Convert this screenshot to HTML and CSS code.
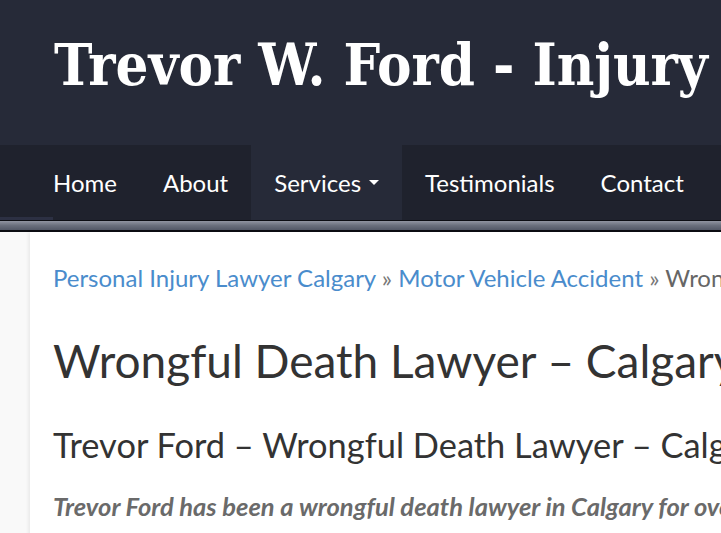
FILE: index.html
```html
<!DOCTYPE html>
<html lang="en">
<head>
  <meta charset="UTF-8">
  <title>Wrongful Death Lawyer – Calgary</title>
  <link rel="stylesheet" href="styles.css">
</head>
<body>
  <header class="site-header">
    <div class="site-title">Trevor W. Ford - Injury Lawyer Calgary</div>
  </header>

  <nav class="main-nav">
    <ul class="menu">
      <li class="menu-item"><a href="#">Home</a></li>
      <li class="menu-item"><a href="#">About</a></li>
      <li class="menu-item active"><a href="#">Services <span class="caret"></span></a></li>
      <li class="menu-item"><a href="#">Testimonials</a></li>
      <li class="menu-item"><a href="#">Contact</a></li>
    </ul>
  </nav>
  <div class="nav-rule"></div>

  <main class="page">
    <div class="content">
      <p class="breadcrumbs">
        <a href="#">Personal Injury Lawyer Calgary</a> <span class="sep">»</span>
        <a href="#">Motor Vehicle Accident</a> <span class="sep">»</span>
        <span class="current">Wrongful Death Lawyer</span>
      </p>

      <h1 class="entry-title">Wrongful Death Lawyer – Calgary</h1>

      <h2>Trevor Ford – Wrongful Death Lawyer – Calgary</h2>

      <p class="lead">Trevor Ford has been a wrongful death lawyer in Calgary for over 30 years.</p>
    </div>
  </main>
</body>
</html>
```

FILE: styles.css
```css
body {
  margin: 0;
  padding: 0;
  background: #f9f9f9;
  font-family: Lato, "Liberation Sans", sans-serif;
  overflow: hidden;
}

.site-header {
  background: #262a38;
  height: 145px;
  padding: 0 0 0 54px;
  box-sizing: border-box;
  white-space: nowrap;
  overflow: hidden;
}

.site-title {
  font-family: "DejaVu Serif", serif;
  font-weight: bold;
  font-stretch: condensed;
  font-size: 57.5px;
  line-height: 1;
  color: #fff;
  padding-top: 37px;
}

.main-nav {
  background: linear-gradient(#2c3043, #2c3043) no-repeat left bottom / 53px 3px, #1f222d;
  height: 75px;
  padding-left: 30px;
  white-space: nowrap;
  overflow: hidden;
}

.menu {
  list-style: none;
  margin: 0;
  padding: 0;
  display: flex;
  height: 100%;
}

.menu-item a {
  display: flex;
  align-items: center;
  height: 75px;
  padding: 0 23px;
  color: #fff;
  text-decoration: none;
  font-size: 24px;
}

.menu-item.active {
  background: #262a38;
}

.caret {
  display: inline-block;
  margin-left: 8px;
  border-left: 5px solid transparent;
  border-right: 5px solid transparent;
  border-top: 5px solid #fff;
}

.nav-rule {
  height: 9px;
  border-top: 1px solid #0c0d12;
  border-bottom: 2px solid #0c0d12;
  background: linear-gradient(#9094a0, #6a6f7c 50%, #535866);
}

.page {
  padding-left: 30px;
}

.content {
  background: #fff;
  box-shadow: -2px 0 3px rgba(0, 0, 0, 0.06);
  padding: 31px 0 0 23px;
  white-space: nowrap;
  overflow: hidden;
  min-height: 320px;
}

.breadcrumbs {
  margin: 0;
  font-size: 24px;
  color: #777;
}

.breadcrumbs a {
  color: #4a8ccc;
  text-decoration: none;
}

.breadcrumbs .current {
  color: #666;
}

.entry-title {
  margin: 41px 0 0;
  font-weight: normal;
  font-size: 46px;
  color: #333;
}

h2 {
  margin: 36px 0 0;
  font-weight: normal;
  font-size: 34.4px;
  color: #333;
}

.lead {
  margin: 26px 0 0;
  font-style: italic;
  font-weight: bold;
  font-size: 25.5px;
  color: #6a6a6a;
}
```
